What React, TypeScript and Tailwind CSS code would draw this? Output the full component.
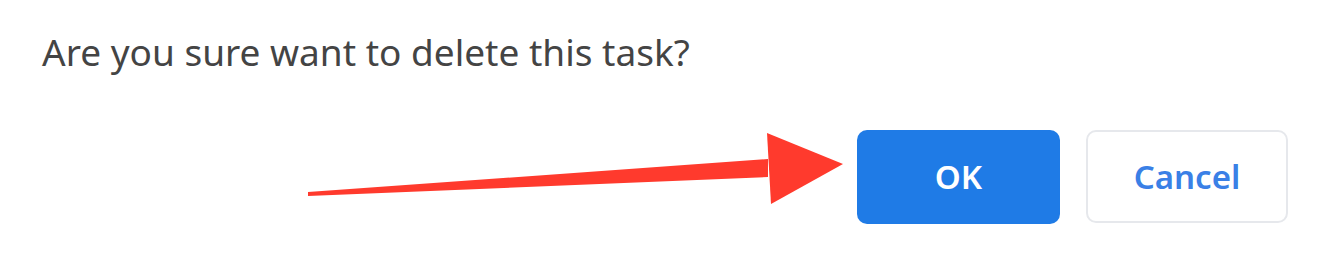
const Arrow = () => (
  <svg
    className="pointer-events-none absolute left-0 top-0"
    width="1320"
    height="256"
    viewBox="0 0 1320 256"
  >
    <polygon points="308,192 768,159 768,177 308,196" fill="#ff3a2d" />
    <polygon points="767,133 843,164 771,204" fill="#ff3a2d" />
  </svg>
);

const App = () => {
  return (
    <div className="relative w-[1320px] h-[256px] bg-white font-['Noto_Sans','Open_Sans',sans-serif] overflow-hidden">
      <div className="pl-[42px] pt-[30px]">
        <p className="text-[37px] leading-[44px] text-[#444444]">
          Are you sure want to delete this task?
        </p>
      </div>

      <div className="flex justify-end gap-[26px] pr-[32px] mt-[56px]">
        <button className="w-[203px] h-[94px] rounded-[10px] bg-[#1f7be6] text-white text-[33px] font-semibold">
          OK
        </button>
        <button className="w-[202px] h-[93px] rounded-[10px] border-2 border-[#e6e8ec] bg-white text-[#3a80e6] text-[33px] font-semibold">
          Cancel
        </button>
      </div>

      <Arrow />
    </div>
  );
};

export default App;
